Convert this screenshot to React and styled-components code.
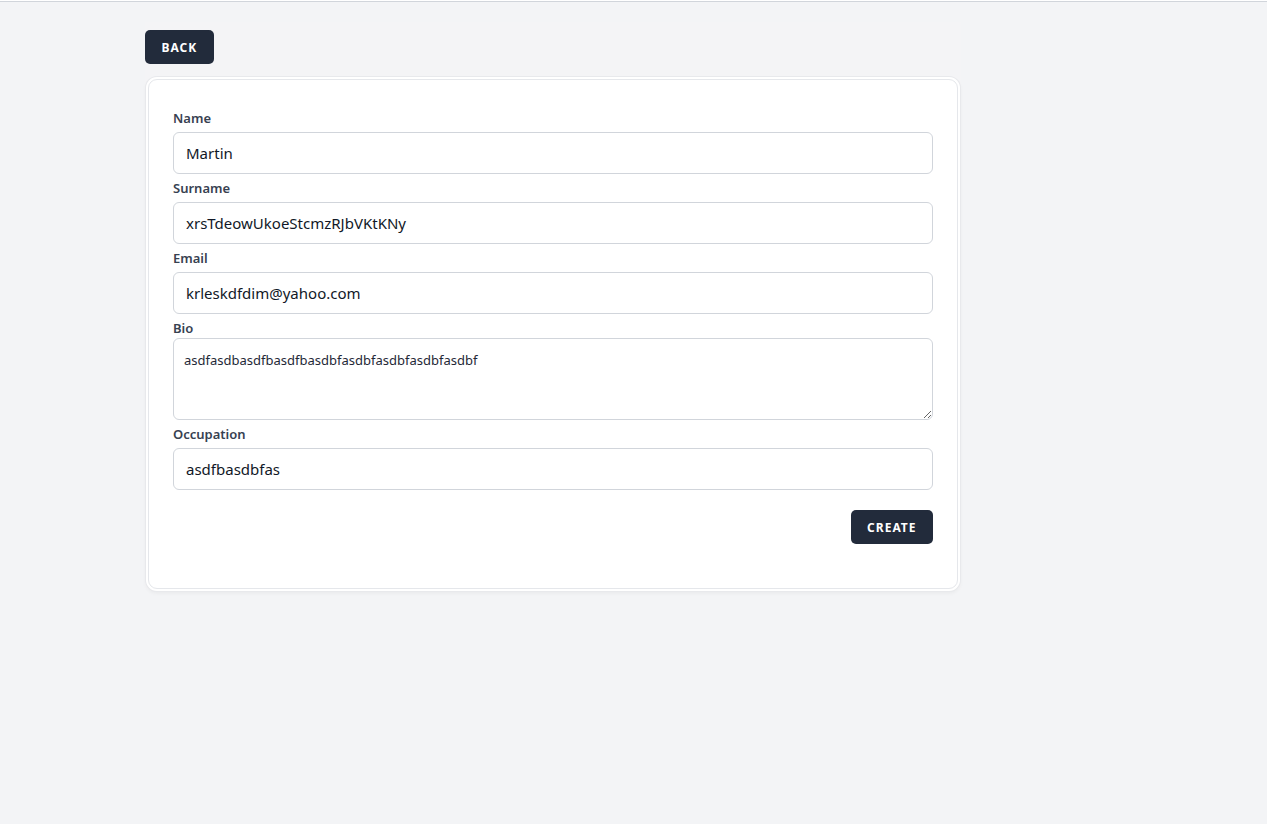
import React from "react"
import styled, { createGlobalStyle } from "styled-components"

const GlobalStyle = createGlobalStyle`
  * { box-sizing: border-box; }
  html, body {
    margin: 0;
    padding: 0;
    background: #f3f4f6;
    font-family: "Noto Sans", "Open Sans", sans-serif;
  }
  body {
    border-top: 1px solid #fff;
    min-height: 824px;
  }
`

const TopRule = styled.div`
  height: 1px;
  background: #d1d5db;
`

const Page = styled.main`
  width: 816px;
  margin-left: 145px;
  padding-top: 20px;
`

const Container = styled.div`
  background: #f4f4f6;
  padding-top: 8px;
`

const Button = styled.button`
  display: inline-flex;
  align-items: center;
  justify-content: center;
  height: 34px;
  padding: 0 16.5px;
  border: 0;
  border-radius: 5px;
  background: #222b3b;
  color: #fff;
  font-family: inherit;
  font-size: 12px;
  font-weight: 700;
  letter-spacing: 1px;
  text-transform: uppercase;
  cursor: pointer;
`

const Card = styled.form`
  margin: 15px 3px 0;
  padding: 28px 24px 44px;
  background: #fff;
  border: 1px solid #e5e7eb;
  border-radius: 9px;
  box-shadow: 0 0 0 2px #fff, 0 0 0 3px #e8e9ec, 0 2px 4px 2px rgba(0, 0, 0, 0.05);
`

const Label = styled.label`
  display: block;
  height: 20px;
  line-height: 20px;
  font-size: 13px;
  font-weight: 600;
  color: #374151;
`

const Input = styled.input`
  display: block;
  width: 100%;
  height: 42px;
  margin: 4px 0;
  padding: 0 12px;
  border: 1px solid #d1d5db;
  border-radius: 6px;
  font-family: inherit;
  font-size: 15px;
  color: #111827;
  background: #fff;
`

const TextArea = styled.textarea`
  display: block;
  width: 100%;
  height: 82px;
  margin: 0 0 4px;
  padding: 12px 10px;
  border: 1px solid #d1d5db;
  border-radius: 6px;
  font-family: inherit;
  font-size: 13px;
  line-height: 18px;
  color: #1f2937;
  background: #fff;
`

const Actions = styled.div`
  display: flex;
  justify-content: flex-end;
  margin-top: 20px;
`

const fields = [
  { id: "name", label: "Name", value: "Martin" },
  { id: "surname", label: "Surname", value: "xrsTdeowUkoeStcmzRJbVKtKNy" },
  { id: "email", label: "Email", value: "krleskdfdim@yahoo.com" },
]

export default function App() {
  return (
    <>
      <GlobalStyle />
      <TopRule />
      <Page>
        <Container>
          <Button type="button">Back</Button>
          <Card onSubmit={(e) => e.preventDefault()}>
            {fields.map((f) => (
              <div key={f.id}>
                <Label htmlFor={f.id}>{f.label}</Label>
                <Input id={f.id} defaultValue={f.value} />
              </div>
            ))}
            <Label htmlFor="bio">Bio</Label>
            <TextArea id="bio" defaultValue="asdfasdbasdfbasdfbasdbfasdbfasdbfasdbfasdbf" />
            <Label htmlFor="occupation">Occupation</Label>
            <Input id="occupation" defaultValue="asdfbasdbfas" />
            <Actions>
              <Button type="submit">Create</Button>
            </Actions>
          </Card>
        </Container>
      </Page>
    </>
  )
}
